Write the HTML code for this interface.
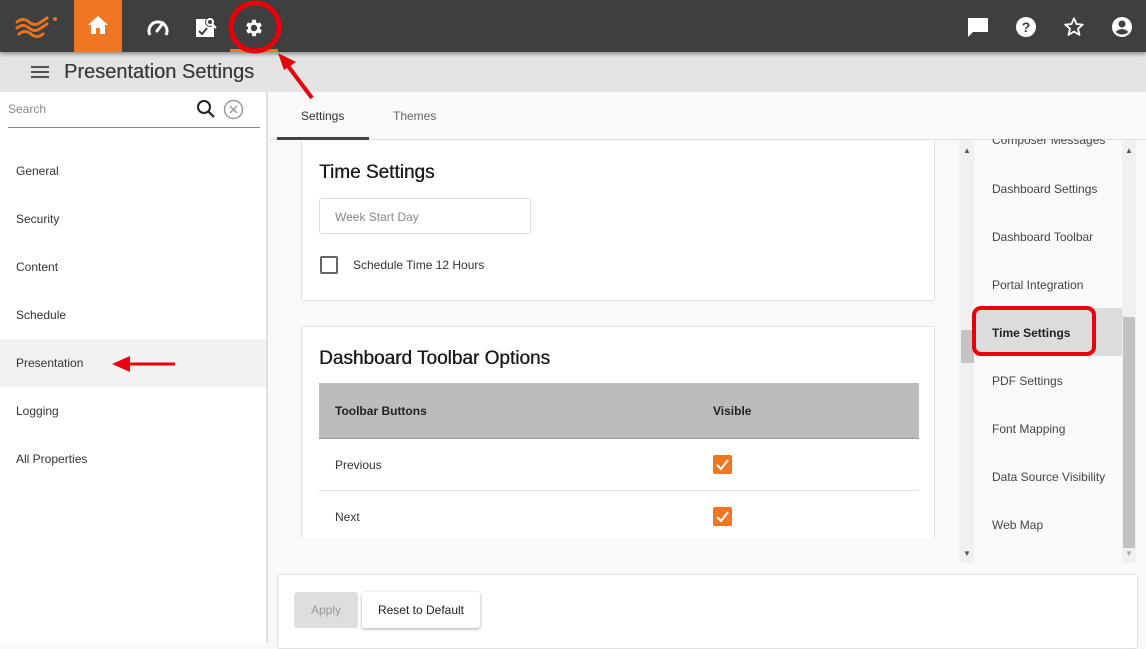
<!DOCTYPE html>
<html><head><meta charset="utf-8"><style>
*{box-sizing:border-box;margin:0;padding:0}
body{width:1146px;height:643px;overflow:hidden;background:#f9f9f9;font-family:"Liberation Sans",sans-serif;position:relative;color:#333}
.abs{position:absolute}
.top{left:0;top:0;width:1146px;height:52px;background:#3f3f3f;box-shadow:0 2px 4px rgba(0,0,0,.4);z-index:2}
.sub{left:0;top:52px;width:1146px;height:40px;background:#e4e4e4}
.left{left:0;top:92px;width:268px;height:551px;background:#fff;border-right:2px solid #e0e0e0}
.nav{position:absolute;left:16px;font-size:12px;color:#333}
.card{background:#fff;border:1px solid #e0e0e0;border-radius:3px}
.rl{position:absolute;left:992px;font-size:12px;color:#444}
.h{font-size:19px;color:#1a1a1a;text-shadow:0.4px 0 0 #1a1a1a}
</style></head><body>
<div class="abs top">
 <svg class="abs" style="left:14px;top:14px" width="46" height="24" viewBox="0 0 46 24"><g fill="none" stroke="#e8731f" stroke-width="3" stroke-linecap="round"><path d="M3 8 q6 -5 12 0 t12 0 l6 -4"/><path d="M3 14 q6 -5 12 0 t12 0 l6 -4"/><path d="M5 20 q6 -5 12 0 t12 0"/></g><circle cx="41" cy="5" r="2" fill="#e8731f"/></svg>
 <div class="abs" style="left:74px;top:0;width:48px;height:52px;background:#ef7622"></div>
 <svg class="abs" style="left:87px;top:15px" width="22" height="20" viewBox="0 0 22 20"><path d="M11 1 L1 10 H4 V19 H9 V13 H13 V19 H18 V10 H21 Z" fill="#fff"/></svg>
 <svg class="abs" style="left:146px;top:16px" width="24" height="22" viewBox="0 0 24 22"><path d="M4 19 A9 9 0 1 1 20 19" fill="none" stroke="#fff" stroke-width="3"/><path d="M11 15 L17 7" stroke="#fff" stroke-width="3" stroke-linecap="round"/></svg>
 <svg class="abs" style="left:194px;top:15px" width="24" height="24" viewBox="0 0 24 24"><path d="M2 4 H20 V22 H2 Z" fill="#fff"/><circle cx="16" cy="7" r="5" fill="#3f3f3f"/><circle cx="16" cy="7" r="3" fill="none" stroke="#fff" stroke-width="2"/><path d="M18 9 L22 13" stroke="#fff" stroke-width="2"/><path d="M5 16 l3 3 l5 -6" stroke="#3f3f3f" stroke-width="2" fill="none"/></svg>
 <svg class="abs" style="left:243px;top:17px" width="22" height="22" viewBox="0 0 24 24"><path fill="#fff" d="M19.4 13a7.5 7.5 0 0 0 0-2l2.1-1.6-2-3.5-2.5 1a7.5 7.5 0 0 0-1.7-1L15 3h-4l-.4 2.9a7.5 7.5 0 0 0-1.7 1l-2.5-1-2 3.5L6.6 11a7.5 7.5 0 0 0 0 2l-2.1 1.6 2 3.5 2.5-1a7.5 7.5 0 0 0 1.7 1L11 21h4l.4-2.9a7.5 7.5 0 0 0 1.7-1l2.5 1 2-3.5zM13 15.5a3.5 3.5 0 1 1 0-7 3.5 3.5 0 0 1 0 7z" transform="translate(-1 0)"/></svg>
 <div class="abs" style="left:230px;top:49px;width:48px;height:3px;background:#ef7622"></div>
 <svg class="abs" style="left:967px;top:17px" width="22" height="20" viewBox="0 0 22 20"><path d="M1 1 H21 V15 H6 L1 20 Z" fill="#fff"/></svg>
 <svg class="abs" style="left:1015px;top:16px" width="22" height="22" viewBox="0 0 22 22"><circle cx="11" cy="11" r="10" fill="#fff"/><text x="11" y="16" text-anchor="middle" font-family="Liberation Sans" font-weight="bold" font-size="14" fill="#3f3f3f">?</text></svg>
 <svg class="abs" style="left:1063px;top:16px" width="22" height="22" viewBox="0 0 24 24"><path d="M12 2.5l2.8 6.3 6.8.6-5.2 4.5 1.6 6.7L12 17l-6 3.6 1.6-6.7L2.4 9.4l6.8-.6z" fill="none" stroke="#fff" stroke-width="2" stroke-linejoin="round"/></svg>
 <svg class="abs" style="left:1111px;top:16px" width="22" height="22" viewBox="0 0 22 22"><circle cx="11" cy="11" r="10" fill="#fff"/><circle cx="11" cy="8" r="3.5" fill="#3f3f3f"/><path d="M4.5 16 Q11 10 17.5 16 Q11 21 4.5 16Z" fill="#3f3f3f"/></svg>
</div>
<div class="abs sub">
 <div class="abs" style="left:31px;top:14px;width:18px;height:2px;background:#555;box-shadow:0 5px 0 #555,0 10px 0 #555"></div>
 <div class="abs" style="left:64px;top:9px;font-size:20px;color:#3c3c3c;text-shadow:0.3px 0 0 #3c3c3c">Presentation Settings</div>
</div>
<div class="abs left">
 <div class="abs" style="left:8px;top:10px;font-size:12px;color:#888">Search</div>
 <svg class="abs" style="left:196px;top:7px" width="20" height="20" viewBox="0 0 20 20"><circle cx="8" cy="8" r="6" fill="none" stroke="#222" stroke-width="2"/><path d="M12.5 12.5 L18 18" stroke="#222" stroke-width="2.2"/></svg>
 <svg class="abs" style="left:223px;top:7px" width="21" height="21" viewBox="0 0 21 21"><circle cx="10.5" cy="10.5" r="9" fill="none" stroke="#999" stroke-width="1.5"/><path d="M7 7 L14 14 M14 7 L7 14" stroke="#999" stroke-width="1.5"/></svg>
 <div class="abs" style="left:8px;top:35px;width:252px;height:1px;background:#888"></div>
 <div class="abs" style="left:0;top:247px;width:266px;height:48px;background:#f2f2f2"></div>
 <div class="nav" style="top:72px">General</div>
 <div class="nav" style="top:120px">Security</div>
 <div class="nav" style="top:168px">Content</div>
 <div class="nav" style="top:216px">Schedule</div>
 <div class="nav" style="top:264px">Presentation</div>
 <div class="nav" style="top:312px">Logging</div>
 <div class="nav" style="top:360px">All Properties</div>
</div>
<div class="abs" style="left:270px;top:139px;width:876px;height:1px;background:#ddd"></div>
<div class="abs" style="left:301px;top:109px;font-size:12px;color:#333">Settings</div>
<div class="abs" style="left:393px;top:109px;font-size:12px;color:#666">Themes</div>
<div class="abs" style="left:277px;top:137px;width:92px;height:3px;background:#444"></div>
<div class="abs" style="left:300px;top:141px;width:636px;height:397px;overflow:hidden">
 <div class="abs card" style="left:1px;top:-2px;width:634px;height:162px">
  <div class="abs h" style="left:17px;top:22px">Time Settings</div>
  <div class="abs" style="left:17px;top:58px;width:212px;height:36px;border:1px solid #ddd;border-radius:3px;font-size:12px;color:#888;padding:11px 15px">Week Start Day</div>
  <div class="abs" style="left:18px;top:116px;width:18px;height:18px;border:2px solid #666;border-radius:2px"></div>
  <div class="abs" style="left:51px;top:118px;font-size:12px;color:#333">Schedule Time 12 Hours</div>
 </div>
 <div class="abs card" style="left:1px;top:185px;width:634px;height:230px">
  <div class="abs h" style="left:17px;top:21px">Dashboard Toolbar Options</div>
  <div class="abs" style="left:17px;top:56px;width:600px;height:56px;background:#bcbcbc;border-bottom:1px solid #999"></div>
  <div class="abs" style="left:33px;top:77px;font-size:12px;font-weight:bold;color:#222">Toolbar Buttons</div>
  <div class="abs" style="left:411px;top:77px;font-size:12px;font-weight:bold;color:#222">Visible</div>
  <div class="abs" style="left:33px;top:131px;font-size:12px;color:#333">Previous</div>
  <div class="abs" style="left:17px;top:163px;width:600px;height:1px;background:#e0e0e0"></div>
  <div class="abs" style="left:33px;top:183px;font-size:12px;color:#333">Next</div>
  <svg class="abs" style="left:411px;top:128px" width="19" height="19" viewBox="0 0 19 19"><rect width="19" height="19" rx="2" fill="#ef7622"/><path d="M4 10 L8 14 L15 5" stroke="#fff" stroke-width="2" fill="none"/></svg>
  <svg class="abs" style="left:411px;top:180px" width="19" height="19" viewBox="0 0 19 19"><rect width="19" height="19" rx="2" fill="#ef7622"/><path d="M4 10 L8 14 L15 5" stroke="#fff" stroke-width="2" fill="none"/></svg>
 </div>
</div>
<div class="abs" style="left:959px;top:141px;width:15px;height:422px;background:#f0f0f0"></div>
<div class="abs" style="left:961px;top:330px;width:13px;height:33px;background:#c4c4c4"></div>
<div class="abs" style="left:963px;top:146px;font-size:8px;color:#555">▲</div>
<div class="abs" style="left:963px;top:549px;font-size:8px;color:#555">▼</div>
<div class="abs" style="left:975px;top:141px;width:147px;height:422px;background:#fafafa;overflow:hidden">
 <div class="abs" style="left:0;top:167px;width:147px;height:48px;background:#dcdcdc"></div>
</div>
<div class="abs" style="left:1122px;top:141px;width:14px;height:422px;background:#f0f0f0"></div>
<div class="abs" style="left:1123px;top:317px;width:12px;height:231px;background:#c2c2c2"></div>
<div class="abs" style="left:1125px;top:146px;font-size:8px;color:#555">▲</div>
<div class="abs" style="left:1125px;top:549px;font-size:8px;color:#aaa">▼</div>
<div class="rl" style="top:133px;clip-path:inset(6px 0 0 0)">Composer Messages</div>
<div class="rl" style="top:182px">Dashboard Settings</div>
<div class="rl" style="top:230px">Dashboard Toolbar</div>
<div class="rl" style="top:278px">Portal Integration</div>
<div class="rl" style="top:326px;font-weight:bold;color:#222">Time Settings</div>
<div class="rl" style="top:374px">PDF Settings</div>
<div class="rl" style="top:422px">Font Mapping</div>
<div class="rl" style="top:470px">Data Source Visibility</div>
<div class="rl" style="top:518px">Web Map</div>
<div class="abs card" style="left:277px;top:574px;width:861px;height:75px">
 <div class="abs" style="left:16px;top:17px;width:64px;height:36px;background:#dedede;border-radius:3px;font-size:12px;color:#999;text-align:center;line-height:36px">Apply</div>
 <div class="abs" style="left:84px;top:17px;width:118px;height:36px;background:#fff;border-radius:3px;box-shadow:0 1px 3px rgba(0,0,0,.35);font-size:12px;color:#222;text-align:center;line-height:36px">Reset to Default</div>
</div>
<svg class="abs" style="left:0;top:0;z-index:5" width="1146" height="643">
 <g stroke="#e8000b" fill="none" stroke-width="5">
  <circle cx="255" cy="27" r="24"/>
  <rect x="974" y="308" width="120" height="46" rx="7" stroke-width="4"/>
  <path d="M312 98 L285 62" stroke-width="4"/>
  <path d="M175 364 L125 364" stroke-width="3"/>
 </g>
 <path d="M278 53 L296 62 L284 70 Z" fill="#e8000b"/>
 <path d="M112 364 L130 356 L130 372 Z" fill="#e8000b"/>
</svg>
</body></html>
